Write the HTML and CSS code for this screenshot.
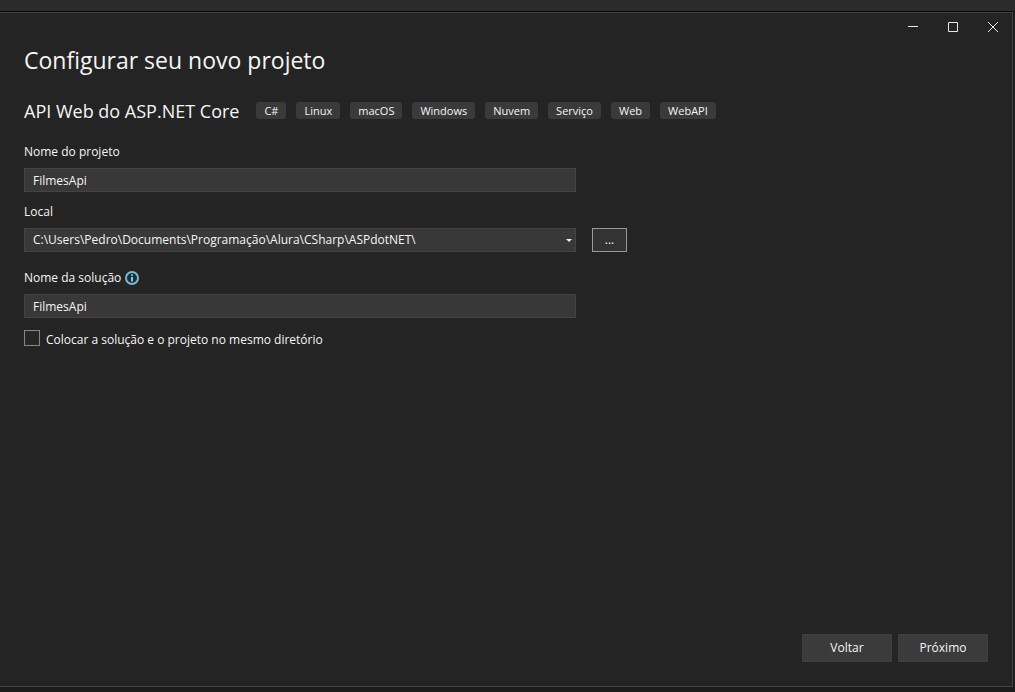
FILE: index.html
```html
<!DOCTYPE html>
<html lang="pt-BR">
<head>
<meta charset="utf-8">
<meta name="viewport" content="width=device-width, initial-scale=1">
<title>Configurar seu novo projeto</title>
<link rel="stylesheet" href="styles.css">
</head>
<body>
<div class="window">
  <header class="titlebar">
    <button type="button" class="caption" aria-label="Minimizar">
      <svg width="12" height="12" viewBox="0 0 12 12"><path d="M1 5.5h10"/></svg>
    </button>
    <button type="button" class="caption" aria-label="Maximizar">
      <svg width="12" height="12" viewBox="0 0 12 12"><path d="M1.5 1.5h9v9h-9z"/></svg>
    </button>
    <button type="button" class="caption" aria-label="Fechar">
      <svg width="12" height="12" viewBox="0 0 12 12"><path d="M1 1l10 10M11 1L1 11"/></svg>
    </button>
  </header>
  <main class="content">
    <h1 class="title">Configurar seu novo projeto</h1>
    <div class="template">
      <h2 class="template-name">API Web do ASP.NET Core</h2>
      <ul class="tags">
        <li class="tag">C#</li>
        <li class="tag">Linux</li>
        <li class="tag">macOS</li>
        <li class="tag">Windows</li>
        <li class="tag">Nuvem</li>
        <li class="tag">Serviço</li>
        <li class="tag">Web</li>
        <li class="tag">WebAPI</li>
      </ul>
    </div>
    <form class="form" id="project-form">
      <div class="field">
        <label class="label" for="project">Nome do projeto</label>
        <input class="control" id="project" type="text" value="FilmesApi">
      </div>
      <div class="field">
        <label class="label" for="location">Local</label>
        <div class="location">
          <div class="combo">
            <select class="control select" id="location">
              <option>C:\Users\Pedro\Documents\Programação\Alura\CSharp\ASPdotNET\</option>
            </select>
            <svg class="arrow" width="6" height="3" viewBox="0 0 6 3"><path d="M0 0h6L3 3z"/></svg>
          </div>
          <button type="button" class="browse">...</button>
        </div>
      </div>
      <div class="field">
        <div class="label-row">
          <label class="label" for="solution">Nome da solução</label>
          <svg class="info" width="14" height="14" viewBox="0 0 14 14">
            <circle cx="7" cy="7" r="6"/>
            <path d="M7 6v4.500M7 3.300v1.500"/>
          </svg>
        </div>
        <input class="control" id="solution" type="text" value="FilmesApi">
      </div>
      <div class="check">
        <input class="box" id="same-folder" type="checkbox">
        <label class="check-label" for="same-folder">Colocar a solução e o projeto no mesmo diretório</label>
      </div>
    </form>
  </main>
  <footer class="actions">
    <button type="button" class="action">Voltar</button>
    <button type="submit" form="project-form" class="action">Próximo</button>
  </footer>
</div>
</body>
</html>
```
FILE: styles.css
```css
* {
  box-sizing: border-box;
}

body {
  display: flex;
  min-height: 100vh;
  margin: 0;
  padding: 11px 2px 5px 0;
  background: linear-gradient(#2b2b2b 11px, #1c1c1c 11px);
  color: #f5f5f5;
  font: 12px/16px "Open Sans", "Noto Sans", sans-serif;
}

button,
input,
select {
  margin: 0;
  color: inherit;
  font: inherit;
}

.window {
  display: flex;
  flex: 1;
  flex-direction: column;
  border: 1px solid #424242;
  border-left: 0;
  background: #242424;
  box-shadow: 0 -1px #080808;
  margin-top: 1px;
}

.titlebar {
  display: flex;
  justify-content: flex-end;
}

.caption {
  display: flex;
  align-items: center;
  justify-content: center;
  width: 40px;
  height: 28px;
  padding: 0 0 0 2px;
  border: 0;
  background: none;
}

.caption svg {
  fill: none;
  stroke: #e8e8e8;
}

.content {
  flex: 1;
  padding: 3px 24px 0;
}

.title {
  margin: 0;
  font-size: 23px;
  font-weight: 400;
  line-height: 32px;
}

.template {
  display: flex;
  flex-wrap: wrap;
  align-items: center;
  gap: 17px;
  margin-top: 23px;
}

.template-name {
  margin: 0;
  font-size: 18px;
  font-weight: 400;
  line-height: 24px;
}

.tags {
  display: flex;
  flex-wrap: wrap;
  gap: 10px;
  margin: 0;
  padding: 0 0 2px;
  list-style: none;
}

.tag {
  padding: 0 8px;
  border-radius: 3px;
  background: #3a3a3a;
  font-size: 11px;
  line-height: 17px;
}

.form {
  display: flex;
  flex-direction: column;
  gap: 12px;
  margin-top: 21px;
}

.field {
  display: flex;
  flex-direction: column;
  align-items: flex-start;
  gap: 8px;
}

.label-row {
  display: flex;
  align-items: center;
  gap: 4px;
  padding-top: 6px;
}

.info circle {
  fill: #14303d;
  stroke: #7fb6cf;
  stroke-width: 2;
}

.info path {
  stroke: #8cc8e4;
  stroke-width: 2;
}

.location {
  display: flex;
  gap: 16px;
  width: 100%;
}

.combo {
  position: relative;
  flex: 0 1 552px;
}

.control {
  display: block;
  width: 100%;
  max-width: 552px;
  height: 24px;
  padding: 0 8px;
  border: 1px solid #434343;
  border-radius: 0;
  outline: 0;
  background: #383838;
}

.select {
  appearance: none;
}

.arrow {
  position: absolute;
  top: 11px;
  right: 4px;
  fill: #f0f0f0;
  pointer-events: none;
}

.browse {
  width: 35px;
  height: 24px;
  padding: 0;
  border: 1px solid #999;
  background: #333;
}

.check {
  display: flex;
  align-items: flex-start;
  gap: 6px;
}

.check-label {
  padding-top: 2px;
}

.box {
  appearance: none;
  width: 16px;
  height: 16px;
  border: 1px solid #858585;
  background: #262626;
}

.actions {
  display: flex;
  justify-content: flex-end;
  gap: 6px;
  padding: 0 24px 24px;
}

.action {
  width: 90px;
  height: 28px;
  padding: 0;
  border: 1px solid #3f3f3f;
  background: #3b3b3b;
}
```
